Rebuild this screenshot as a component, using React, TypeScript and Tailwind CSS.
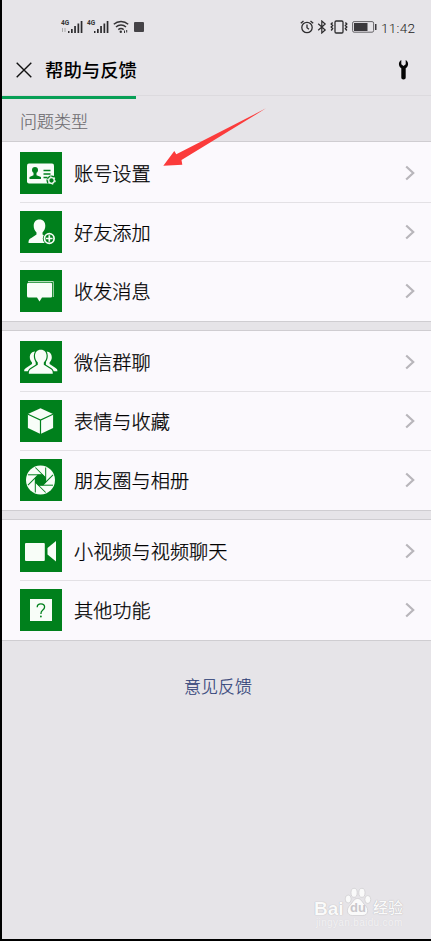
import type { ReactNode } from 'react';

type Item = { label: string; icon: ReactNode };

const FONT = "font-['Roboto','Noto_Sans_CJK_SC',sans-serif]";
const G = '#00801c';

const AccountIcon = (
  <>
    <rect x="7" y="11.5" width="27" height="20" rx="2" />
    <circle cx="15" cy="18" r="3" fill={G} />
    <path d="M13.500 19h3v4.200l4.500 1.800v2H9.500v-2l4-1.800z" fill={G} />
    <path d="M23.500 18.500h7M23.500 22h7M23.500 25.500h4" stroke={G} strokeWidth="1.500" />
    <circle cx="31.500" cy="28.500" r="5" fill={G} />
    <circle cx="31.500" cy="28.500" r="2.800" fill="none" stroke="#f4fbf4" strokeWidth="1.300" />
    <circle cx="31.500" cy="28.500" r="3.700" fill="none" stroke="#f4fbf4" strokeWidth="1.200" strokeDasharray="1.500 2.375" />
  </>
);

const FriendIcon = (
  <>
    <path d="M19.500 8.500c3.800 0 5.800 2.700 5.800 6.200 0 2.800-1 5-2.800 6.700v2l5 2.600v6H8.500c0-3 .7-4 2.800-5l5.200-3.400v-2.200c-1.800-1.700-2.800-3.900-2.800-6.700 0-3.500 2-6.200 5.800-6.200z" />
    <circle cx="29.300" cy="27.500" r="6.500" fill={G} />
    <circle cx="29.300" cy="27.500" r="4.800" fill="none" stroke="#f8fdf8" strokeWidth="1.700" />
    <path d="M26 27.500h6.600M29.300 24.200v6.600" stroke="#f8fdf8" strokeWidth="1.700" />
  </>
);

const MessageIcon = (
  <>
    <path d="M8 11.500h25.300v15.500" fill="none" stroke="#b5dcba" strokeWidth="1" />
    <path d="M8.500 12.800h22.500a1 1 0 0 1 1 1v12.700a1 1 0 0 1-1 1h-9l-2.500 4-2.500-4h-8.500a1.500 1.500 0 0 1-1.500-1.500v-11.700a1.500 1.500 0 0 1 1.500-1.500z" />
  </>
);

const GroupIcon = (
  <>
    <path d="M15 10.500c-3.200.2-5.200 2.600-5.200 5.800 0 2 .8 3.800 2.200 5.200v1.600l-6 4c-1.400.9-1.800 1.500-1.800 3.200h12zM26.600 10.500c3.200.2 5.200 2.600 5.200 5.800 0 2-.8 3.800-2.200 5.200v1.600l6 4c1.400.9 1.800 1.500 1.800 3.200h-12z" />
    <path
      d="M20.800 8.800c3.700 0 5.800 2.600 5.800 6 0 2.800-1 5.100-2.800 6.700v2.200l6.800 4.300c1.600 1 2.200 2 2.200 4.700H8.800c0-2.700.6-3.700 2.200-4.700l6.800-4.300v-2.200c-1.800-1.600-2.800-3.900-2.800-6.700 0-3.400 2.100-6 5.800-6z"
      stroke={G}
      strokeWidth="2.400"
      paintOrder="stroke"
    />
  </>
);

const CubeIcon = (
  <>
    <path d="M20.500 8.200l12.600 5.800v14l-12.600 6-12.600-6v-14z" />
    <path d="M8 14.200l12.500 5.800 12.500-5.800M20.500 20v14" fill="none" stroke={G} strokeWidth="1.200" />
  </>
);

const ApertureIcon = (
  <>
    <circle cx="20.500" cy="21" r="14.500" />
    <path d="M18.300 15.600h4.500l3.200 3.200v4.500l-3.200 3.200h-4.500l-3.200-3.200v-4.500z" fill={G} />
    {[0, 45, 90, 135, 180, 225, 270, 315].map((angle) => (
      <path
        key={angle}
        d="M22.500 15.800H8"
        stroke={G}
        strokeWidth="1"
        transform={`rotate(${angle} 20.500 21)`}
      />
    ))}
  </>
);

const VideoIcon = (
  <>
    <rect x="5" y="13" width="19.800" height="18" rx="1" />
    <path d="M36 11v20.500l-8.500-7v-6.500z" />
  </>
);

const HelpIcon = (
  <>
    <rect x="10" y="10" width="22" height="22" />
    <path
      d="M17.200 18.300c0-2.200 1.500-3.500 3.700-3.500s3.700 1.300 3.700 3.300c0 1.500-.8 2.300-2 3.200-1.300 1-1.700 1.600-1.700 3.700"
      fill="none"
      stroke={G}
      strokeWidth="1.300"
    />
    <circle cx="20.900" cy="27.500" r=".9" fill={G} />
  </>
);

function Row({ item, last }: { item: Item; last: boolean }) {
  return (
    <div className="pl-[18px]">
      <div
        className={`flex h-[59px] items-center border-b pr-4 ${last ? 'border-transparent' : 'border-[#e3e1e5]'}`}
      >
        <div className="size-[42px] shrink-0 bg-[#00801c]">
          <svg width="42" height="42" viewBox="0 0 42 42" fill="#f8fdf8">
            {item.icon}
          </svg>
        </div>
        <span className="ml-3 grow pt-[3px] text-[19.2px] leading-[28px] font-light whitespace-nowrap text-black [-webkit-text-stroke:0.25px_#000]">
          {item.label}
        </span>
        <svg width="10" height="16" viewBox="0 0 10 16" fill="none" stroke="#b8b6bb" strokeWidth="2.200" className="-mt-px">
          <path d="M1.200 1.500l7 6.500-7 6.500" />
        </svg>
      </div>
    </div>
  );
}

function Group({ items, className }: { items: Item[]; className: string }) {
  return (
    <section className={`border-y border-[#cfcdd1] bg-[#fbf9fd] pt-[2px] ${className}`}>
      {items.map((item, i) => (
        <Row key={item.label} item={item} last={i === items.length - 1} />
      ))}
    </section>
  );
}

function Signal({ arrows }: { arrows: boolean }) {
  return (
    <div className="flex w-[26px]">
      <div className="flex w-2 flex-col">
        <span className="text-[6.500px] leading-[7px] font-bold text-[#333]">4G</span>
        {arrows && (
          <svg width="6" height="5" viewBox="0 0 6 5" stroke="#aaa" strokeWidth="1" className="mt-px">
            <path d="M1.500 0v4M4 0v4" />
          </svg>
        )}
      </div>
      <svg width="15" height="14" viewBox="0 0 15 14" fill="#2c2b2d" className="-ml-px">
        <path d="M0 11h1.500v2H0zM3 9h1.700v4H3zM6.200 6h1.700v7H6.200zM9.500 3.500h1.700V13H9.500zM12.700 1h1.700v12h-1.700z" />
      </svg>
    </div>
  );
}

function StatusBar() {
  return (
    <div className="flex h-[54px] items-center justify-between pr-[15px] pl-[59px]">
      <div className="flex items-center">
        <Signal arrows />
        <Signal arrows={false} />
        <svg width="16" height="14" viewBox="0 0 16 14" fill="none" stroke="#343335" strokeWidth="1.400">
          <path d="M.8 4.300c4-3.800 10.400-3.800 14.400 0M3 7c2.800-2.700 7.200-2.700 10 0M5.300 9.600c1.600-1.400 3.800-1.400 5.400 0" />
          <circle cx="7.800" cy="11.800" r="1.200" fill="#343335" stroke="none" />
          <path d="M11.500 10.500v2.500M13.700 10v2.500" strokeWidth="1" />
        </svg>
        <div className="ml-[5px] size-[10px] rounded-[1px] bg-[#454347]" />
      </div>
      <div className="flex items-center">
        <svg width="14" height="14" viewBox="0 0 14 14" fill="none" stroke="#2d2c2e" strokeWidth="1.300">
          <circle cx="7" cy="7.500" r="5.200" />
          <path d="M7 4.500v3.200l2 1.500M.8 3.300L3.500.9M13.200 3.300L10.500.9" />
        </svg>
        <svg width="10" height="14" viewBox="0 0 10 14" fill="none" stroke="#2d2c2e" strokeWidth="1.200" className="ml-[3px]">
          <path d="M1.200 3.800l7 6.200-3.400 3V1l3.400 3-7 6.200" />
        </svg>
        <svg width="18" height="14" viewBox="0 0 18 14" fill="none" stroke="#2d2c2e" strokeWidth="1.300" className="ml-[3px]">
          <rect x="5" y="1" width="8" height="12" rx="1.200" />
          <path d="M2.600 2.500l-1.400 1.500 1.400 1.500-1.400 1.500 1.400 1.500-1.400 2M15.400 2.500l1.400 1.500-1.400 1.500 1.400 1.500-1.400 1.500 1.400 2" strokeWidth="1.400" />
        </svg>
        <svg width="26" height="12" viewBox="0 0 26 12" className="ml-[4px]">
          <rect x=".6" y=".6" width="21" height="10.600" rx="1.500" fill="none" stroke="#656367" strokeWidth="1" />
          <rect x="2" y="2" width="13.500" height="8" fill="#3b393d" />
          <rect x="23" y="3" width="1.500" height="6" fill="#3b393d" />
        </svg>
        <span className="ml-[3px] w-[35px] pt-px text-[13.500px] leading-[16px] font-light tracking-[0.300px] whitespace-nowrap text-[#222]">
          11:42
        </span>
      </div>
    </div>
  );
}

function Watermark() {
  return (
    <div className="absolute top-[886px] left-[312px] h-[44px] w-[94px] text-[#fafafa] [text-shadow:0_0_1px_#b8b6ba,0_0_1px_#c8c6ca]">
      <span className="absolute top-[12px] left-0 font-['Liberation_Sans',sans-serif] text-[19px] leading-[22px] font-bold">
        Bai
      </span>
      <svg width="28" height="30" viewBox="0 0 30 30" preserveAspectRatio="none" fill="#fafafa" stroke="#cbc9cd" strokeWidth=".7" className="absolute top-[1px] left-[30px]">
        <ellipse cx="4.500" cy="12" rx="3.200" ry="4" />
        <ellipse cx="10.800" cy="5.800" rx="3.300" ry="4.500" />
        <ellipse cx="19.200" cy="5.800" rx="3.300" ry="4.500" />
        <ellipse cx="25.500" cy="12.500" rx="3.200" ry="4" />
        <path d="M14.500 11.500c4 0 5 4 8.200 6.800 4.500 4 3 10.200-2.500 10.200H8.800c-5.500 0-7-6.200-2.500-10.200 3.200-2.800 4.200-6.800 8.200-6.800z" />
      </svg>
      <span className="absolute top-[14px] left-[36px] font-['Liberation_Sans',sans-serif] text-[13px] leading-[16px] font-bold text-[#c9c7cb] [text-shadow:none]">
        du
      </span>
      <span className="absolute top-[12px] left-[59px] text-[15px] leading-[20px] font-medium whitespace-nowrap">经验</span>
      <span className="absolute top-[31px] left-[2px] font-['Liberation_Sans',sans-serif] text-[10px] leading-[12px] tracking-[0.350px] whitespace-nowrap text-[#f3f2f4] [text-shadow:0_0_1px_#d4d2d6]">
        jingyan.baidu.com
      </span>
    </div>
  );
}

export default function App() {
  return (
    <div className={`relative h-[941px] w-[431px] overflow-hidden border-b-2 border-l-2 border-black bg-[#e6e4e8] ${FONT}`}>
      <StatusBar />
      <header className="flex h-[42px] items-center border-b border-[#dcdade] pr-[22px] pl-[14px]">
        <svg width="16" height="16" viewBox="0 0 16 16" stroke="#111" strokeWidth="1.400" className="mt-[-9px]">
          <path d="M.7.700l14.600 14.600M15.300.700L.7 15.300" />
        </svg>
        <h1 className="mt-[-7px] ml-[13px] grow text-[18.400px] leading-[26px] font-medium text-black">帮助与反馈</h1>
        <svg width="11" height="21" viewBox="0 0 12 21" preserveAspectRatio="none" className="mt-[-10px]">
          <path d="M3.600 1v4.200l2.400 1.800 2.400-1.800V1c1.600.8 2.600 2.300 2.600 4 0 2-1 3.300-2.600 4.200v9.300c0 1.300-.9 2-2.400 2s-2.400-.7-2.400-2V9.200C2 8.300 1 7 1 5c0-1.700 1-3.200 2.600-4z" fill="#050505" />
        </svg>
      </header>
      <div className="h-[3px] w-[134px] bg-[#079f56]" />
      <div className="flex h-[42px] items-center pt-[4px] pl-[18px] text-[17px] leading-[24px] font-light text-[#6d6b6f] [-webkit-text-stroke:0.15px_#6d6b6f]">
        问题类型
      </div>
      <main className="flex flex-col gap-2">
        <Group
          className=""
          items={[
            { label: '账号设置', icon: AccountIcon },
            { label: '好友添加', icon: FriendIcon },
            { label: '收发消息', icon: MessageIcon },
          ]}
        />
        <Group
          className=""
          items={[
            { label: '微信群聊', icon: GroupIcon },
            { label: '表情与收藏', icon: CubeIcon },
            { label: '朋友圈与相册', icon: ApertureIcon },
          ]}
        />
        <Group
          className=""
          items={[
            { label: '小视频与视频聊天', icon: VideoIcon },
            { label: '其他功能', icon: HelpIcon },
          ]}
        />
      </main>
      <a className="mt-[34px] block pl-[3px] text-center text-[17px] leading-[24px] font-light text-[#2f4177] [-webkit-text-stroke:0.2px_#2f4177]">
        意见反馈
      </a>
      <svg width="106" height="62" viewBox="0 0 106 62" fill="#fb3b3b" className="absolute top-[106px] left-[158px]">
        <path d="M106.500 2L21.500 54l.8 4.700L3.300 59.700l11-14.700 2 3.200z" />
      </svg>
      <Watermark />
    </div>
  );
}
